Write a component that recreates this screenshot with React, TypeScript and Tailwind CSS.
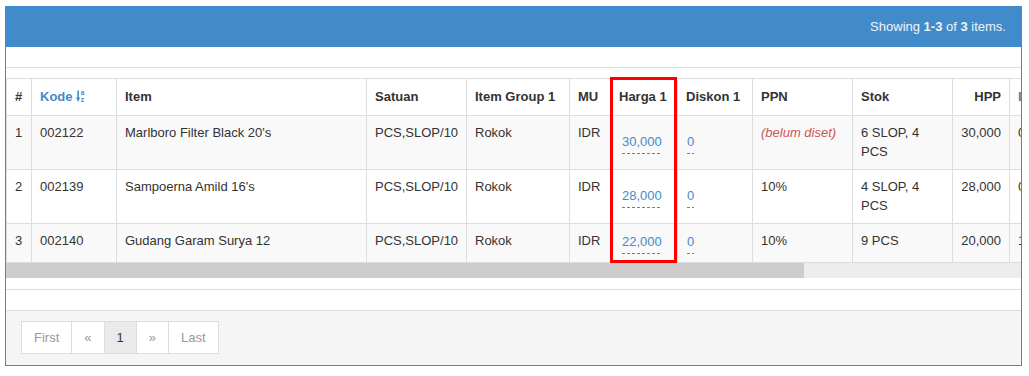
import React from "react";

interface Row {
  no: number;
  kode: string;
  item: string;
  satuan: string;
  group: string;
  mu: string;
  harga: string;
  diskon: string;
  ppn: string | null;
  stok: string;
  hpp: string;
  laba: string;
  striped: boolean;
  height: string;
}

const rows: Row[] = [
  {
    no: 1,
    kode: "002122",
    item: "Marlboro Filter Black 20's",
    satuan: "PCS,SLOP/10",
    group: "Rokok",
    mu: "IDR",
    harga: "30,000",
    diskon: "0",
    ppn: null,
    stok: "6 SLOP, 4 PCS",
    hpp: "30,000",
    laba: "0",
    striped: true,
    height: "h-[54px]",
  },
  {
    no: 2,
    kode: "002139",
    item: "Sampoerna Amild 16's",
    satuan: "PCS,SLOP/10",
    group: "Rokok",
    mu: "IDR",
    harga: "28,000",
    diskon: "0",
    ppn: "10%",
    stok: "4 SLOP, 4 PCS",
    hpp: "28,000",
    laba: "0",
    striped: false,
    height: "h-[54px]",
  },
  {
    no: 3,
    kode: "002140",
    item: "Gudang Garam Surya 12",
    satuan: "PCS,SLOP/10",
    group: "Rokok",
    mu: "IDR",
    harga: "22,000",
    diskon: "0",
    ppn: "10%",
    stok: "9 PCS",
    hpp: "20,000",
    laba: "1",
    striped: true,
    height: "h-[39px]",
  },
];

const SortIcon = () => (
  <svg width="9" height="13" viewBox="0 0 9 13" className="inline-block align-[-2px]">
    <rect x="1.3" y="0.5" width="1.6" height="9" fill="#428bca" />
    <polygon points="0,7.5 4.2,7.5 2.1,12" fill="#428bca" />
    <text x="4.8" y="5.2" fontSize="6.5" fill="#428bca" fontFamily="Liberation Sans, Arial, sans-serif">
      a
    </text>
    <text x="4.8" y="12.2" fontSize="6.5" fill="#428bca" fontFamily="Liberation Sans, Arial, sans-serif">
      z
    </text>
  </svg>
);

// x-editable style link, dashed underline drawn as a repeating gradient
const Editable = ({ value }: { value: string }) => (
  <span className="inline-block leading-[19px] pb-[3px] text-[#428bca] bg-[linear-gradient(to_right,#428bca_3px,transparent_3px)] bg-[length:5px_1px] bg-repeat-x bg-[position:0_100%]">
    {value}
  </span>
);

const th = "border-r border-b border-[#ddd] px-2 text-left font-bold text-[#333] align-middle";
const td = "border-r border-b border-[#ddd] px-2 py-2 align-top text-[#333]";

export default function App() {
  return (
    <div className="font-['Liberation_Sans',Arial,sans-serif] text-[13px] leading-[18.57px] text-[#333] bg-white min-h-[376px] pt-[6px] pl-[5px]">
      <div className="w-[1017px] border border-[#428bca] bg-white">
        {/* heading */}
        <div className="h-[40px] bg-[#428bca] flex items-center justify-end pr-[15px] text-[#eef3f9]">
          <span>
            Showing <b>1-3</b> of <b>3</b> items.
          </span>
        </div>
        <div className="h-[21px] border-b border-[#ddd]" />

        {/* table */}
        <div className="relative mt-[10px]">
          <div className="overflow-hidden">
            <table className="border-separate border-spacing-0 table-fixed w-[1094px] border-l border-t border-[#ddd]">
              <colgroup>
                <col className="w-[25px]" />
                <col className="w-[85px]" />
                <col className="w-[250px]" />
                <col className="w-[100px]" />
                <col className="w-[103px]" />
                <col className="w-[41px]" />
                <col className="w-[67px]" />
                <col className="w-[75px]" />
                <col className="w-[100px]" />
                <col className="w-[100px]" />
                <col className="w-[57px]" />
                <col className="w-[90px]" />
              </colgroup>
              <thead>
                <tr className="h-[37px] bg-white">
                  <th className={th}>#</th>
                  <th className={th}>
                    <span className="text-[#428bca]">Kode</span> <SortIcon />
                  </th>
                  <th className={th}>Item</th>
                  <th className={th}>Satuan</th>
                  <th className={th}>Item Group 1</th>
                  <th className={th}>MU</th>
                  <th className={th}>Harga 1</th>
                  <th className={th}>Diskon 1</th>
                  <th className={th}>PPN</th>
                  <th className={th}>Stok</th>
                  <th className={`${th} text-right`}>HPP</th>
                  <th className={`${th} text-[#777]`}>L</th>
                </tr>
              </thead>
              <tbody>
                {rows.map((r) => (
                  <tr key={r.no} className={`${r.height} ${r.striped ? "bg-[#f9f9f9]" : "bg-white"}`}>
                    <td className={td}>{r.no}</td>
                    <td className={td}>{r.kode}</td>
                    <td className={td}>{r.item}</td>
                    <td className={td}>{r.satuan}</td>
                    <td className={td}>{r.group}</td>
                    <td className={td}>{r.mu}</td>
                    <td className="border-r border-b border-[#ddd] pl-[11px] pr-2 align-middle">
                      <Editable value={r.harga} />
                    </td>
                    <td className="border-r border-b border-[#ddd] pl-[9px] pr-2 align-middle">
                      <Editable value={r.diskon} />
                    </td>
                    <td className={td}>
                      {r.ppn ?? <span className="italic text-[#c55]">(belum diset)</span>}
                    </td>
                    <td className={td}>{r.stok}</td>
                    <td className={`${td} text-right`}>{r.hpp}</td>
                    <td className={td}>{r.laba}</td>
                  </tr>
                ))}
              </tbody>
            </table>
          </div>

          {/* horizontal scrollbar */}
          <div className="h-[15px] bg-[#ededed] flex">
            <div className="w-[798px] h-full bg-[#cdcdcd]" />
          </div>

          {/* highlight on Harga 1 column */}
          <div className="absolute left-[604px] top-[-1px] w-[67px] h-[186px] border-[3px] border-[#ff0000] pointer-events-none" />
        </div>

        <div className="h-[12px] border-b border-[#ddd]" />
        <div className="h-[21px] border-b border-[#ddd]" />

        {/* footer with pagination */}
        <div className="h-[54px] bg-[#f5f5f5] pl-[15px] pt-[10px]">
          <ul className="flex">
            <li className="border border-[#ddd] bg-white px-3 py-[6px] leading-[19px] text-[#999]">First</li>
            <li className="-ml-px border border-[#ddd] bg-white px-3 py-[6px] leading-[19px] text-[#999]">«</li>
            <li className="-ml-px border border-[#ddd] bg-[#eaeaea] px-3 py-[6px] leading-[19px] text-[#333]">1</li>
            <li className="-ml-px border border-[#ddd] bg-white px-3 py-[6px] leading-[19px] text-[#999]">»</li>
            <li className="-ml-px border border-[#ddd] bg-white px-3 py-[6px] leading-[19px] text-[#999]">Last</li>
          </ul>
        </div>
      </div>
    </div>
  );
}
